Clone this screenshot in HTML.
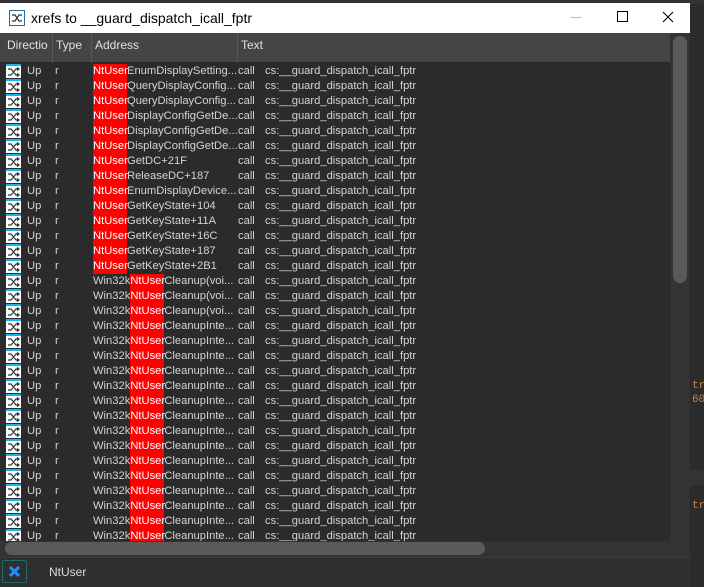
<!DOCTYPE html>
<html><head><meta charset="utf-8"><style>
body{margin:0;width:704px;height:586px;background:#2b2b2b;overflow:hidden;font-family:"Liberation Sans",sans-serif;position:relative}
.top{position:absolute;left:0;top:0;width:704px;height:4px;background:#333}
.title{position:absolute;left:0;top:3px;width:690px;height:30px;background:#fff;color:#000;font-size:14px}
.title .t{position:absolute;left:31px;top:7px}
.win{position:absolute;left:0;top:33px;width:690px;height:553px;background:#2b2b2b}
.hdr{position:absolute;left:0;top:0;width:670px;height:29px;background:#454545;color:#e0e0e0;font-size:12px}
.hdr span{position:absolute;top:5px}
.sep{position:absolute;top:0;width:1px;height:29px;background:#5a5a5a}
.rows{position:absolute;left:0;top:31px;width:670px;height:477px;overflow:hidden;color:#d4d4d4;font-size:11.2px}
.r{position:relative;height:15px;line-height:15px;white-space:nowrap}
.r span{position:absolute;top:0}
.r svg{position:absolute;left:6px;top:0}
.a{left:93px}
i{font-style:normal}
.red{background:#ff0000;display:inline-block;width:34px;color:#fff}
.vs{position:absolute;left:670px;top:0;width:20px;height:508px;background:#333}
.vt{position:absolute;left:673px;top:3px;width:14px;height:247px;background:#5a5a5a;border-radius:7px}
.hs{position:absolute;left:0;top:508px;width:690px;height:16px;background:#333}
.ht{position:absolute;left:5px;top:509px;width:480px;height:13px;background:#5a5a5a;border-radius:7px}
.bot{position:absolute;left:0;top:524px;width:690px;height:29px;background:#2f2f2f;border-top:1px solid #3c3c3c;color:#ddd;font-size:12px}
</style></head><body>
<svg width="0" height="0" style="position:absolute"><defs><symbol id="x" viewBox="0 0 15 15"><rect x="0" y="0" width="15" height="2" fill="#1ab4ea"/><rect x="0" y="2" width="15" height="12" fill="#fff"/><path d="M2 5h3l5 6h3M2 11h3l5-6h3M11 3.5l2 1.5-2 1.5M11 9.5l2 1.5-2 1.5" stroke="#333" stroke-width="1.2" fill="none"/></symbol></defs></svg>
<div class="top"></div>
<div class="title"><svg style="position:absolute;left:9px;top:7px" width="16" height="16"><rect x="0.5" y="0.5" width="15" height="15" fill="#fff" stroke="#2a6aa0"/><path d="M3 5h3l4 6h3M3 11h3l4-6h3" stroke="#333" stroke-width="1.2" fill="none"/></svg><span class="t">xrefs to __guard_dispatch_icall_fptr</span>
<svg style="position:absolute;left:570px;top:14px" width="12" height="2"><rect width="12" height="1" fill="#bbb"/></svg>
<svg style="position:absolute;left:617px;top:8px" width="11" height="11"><rect x="0.5" y="0.5" width="10" height="10" fill="none" stroke="#000"/></svg>
<svg style="position:absolute;left:662px;top:8px" width="12" height="12"><path d="M1 1L11 11M11 1L1 11" stroke="#000" stroke-width="1.1"/></svg>
</div>
<div class="win">
<div class="hdr"><span style="left:7px">Directio</span><div class="sep" style="left:52px"></div><span style="left:56px">Type</span><div class="sep" style="left:91px"></div><span style="left:95px">Address</span><div class="sep" style="left:237px"></div><span style="left:241px">Text</span></div>
<div class="rows">
<div class="r"><svg width="15" height="15"><use href="#x"/></svg><span style="left:27px">Up</span><span style="left:55px">r</span><span class="a"><i class="red">NtUser</i>EnumDisplaySetting...</span><span style="left:238px">call</span><span style="left:265px">cs:__guard_dispatch_icall_fptr</span></div>
<div class="r"><svg width="15" height="15"><use href="#x"/></svg><span style="left:27px">Up</span><span style="left:55px">r</span><span class="a"><i class="red">NtUser</i>QueryDisplayConfig...</span><span style="left:238px">call</span><span style="left:265px">cs:__guard_dispatch_icall_fptr</span></div>
<div class="r"><svg width="15" height="15"><use href="#x"/></svg><span style="left:27px">Up</span><span style="left:55px">r</span><span class="a"><i class="red">NtUser</i>QueryDisplayConfig...</span><span style="left:238px">call</span><span style="left:265px">cs:__guard_dispatch_icall_fptr</span></div>
<div class="r"><svg width="15" height="15"><use href="#x"/></svg><span style="left:27px">Up</span><span style="left:55px">r</span><span class="a"><i class="red">NtUser</i>DisplayConfigGetDe...</span><span style="left:238px">call</span><span style="left:265px">cs:__guard_dispatch_icall_fptr</span></div>
<div class="r"><svg width="15" height="15"><use href="#x"/></svg><span style="left:27px">Up</span><span style="left:55px">r</span><span class="a"><i class="red">NtUser</i>DisplayConfigGetDe...</span><span style="left:238px">call</span><span style="left:265px">cs:__guard_dispatch_icall_fptr</span></div>
<div class="r"><svg width="15" height="15"><use href="#x"/></svg><span style="left:27px">Up</span><span style="left:55px">r</span><span class="a"><i class="red">NtUser</i>DisplayConfigGetDe...</span><span style="left:238px">call</span><span style="left:265px">cs:__guard_dispatch_icall_fptr</span></div>
<div class="r"><svg width="15" height="15"><use href="#x"/></svg><span style="left:27px">Up</span><span style="left:55px">r</span><span class="a"><i class="red">NtUser</i>GetDC+21F</span><span style="left:238px">call</span><span style="left:265px">cs:__guard_dispatch_icall_fptr</span></div>
<div class="r"><svg width="15" height="15"><use href="#x"/></svg><span style="left:27px">Up</span><span style="left:55px">r</span><span class="a"><i class="red">NtUser</i>ReleaseDC+187</span><span style="left:238px">call</span><span style="left:265px">cs:__guard_dispatch_icall_fptr</span></div>
<div class="r"><svg width="15" height="15"><use href="#x"/></svg><span style="left:27px">Up</span><span style="left:55px">r</span><span class="a"><i class="red">NtUser</i>EnumDisplayDevice...</span><span style="left:238px">call</span><span style="left:265px">cs:__guard_dispatch_icall_fptr</span></div>
<div class="r"><svg width="15" height="15"><use href="#x"/></svg><span style="left:27px">Up</span><span style="left:55px">r</span><span class="a"><i class="red">NtUser</i>GetKeyState+104</span><span style="left:238px">call</span><span style="left:265px">cs:__guard_dispatch_icall_fptr</span></div>
<div class="r"><svg width="15" height="15"><use href="#x"/></svg><span style="left:27px">Up</span><span style="left:55px">r</span><span class="a"><i class="red">NtUser</i>GetKeyState+11A</span><span style="left:238px">call</span><span style="left:265px">cs:__guard_dispatch_icall_fptr</span></div>
<div class="r"><svg width="15" height="15"><use href="#x"/></svg><span style="left:27px">Up</span><span style="left:55px">r</span><span class="a"><i class="red">NtUser</i>GetKeyState+16C</span><span style="left:238px">call</span><span style="left:265px">cs:__guard_dispatch_icall_fptr</span></div>
<div class="r"><svg width="15" height="15"><use href="#x"/></svg><span style="left:27px">Up</span><span style="left:55px">r</span><span class="a"><i class="red">NtUser</i>GetKeyState+187</span><span style="left:238px">call</span><span style="left:265px">cs:__guard_dispatch_icall_fptr</span></div>
<div class="r"><svg width="15" height="15"><use href="#x"/></svg><span style="left:27px">Up</span><span style="left:55px">r</span><span class="a"><i class="red">NtUser</i>GetKeyState+2B1</span><span style="left:238px">call</span><span style="left:265px">cs:__guard_dispatch_icall_fptr</span></div>
<div class="r"><svg width="15" height="15"><use href="#x"/></svg><span style="left:27px">Up</span><span style="left:55px">r</span><span class="a">Win32k<i class="red">NtUser</i>Cleanup(voi...</span><span style="left:238px">call</span><span style="left:265px">cs:__guard_dispatch_icall_fptr</span></div>
<div class="r"><svg width="15" height="15"><use href="#x"/></svg><span style="left:27px">Up</span><span style="left:55px">r</span><span class="a">Win32k<i class="red">NtUser</i>Cleanup(voi...</span><span style="left:238px">call</span><span style="left:265px">cs:__guard_dispatch_icall_fptr</span></div>
<div class="r"><svg width="15" height="15"><use href="#x"/></svg><span style="left:27px">Up</span><span style="left:55px">r</span><span class="a">Win32k<i class="red">NtUser</i>Cleanup(voi...</span><span style="left:238px">call</span><span style="left:265px">cs:__guard_dispatch_icall_fptr</span></div>
<div class="r"><svg width="15" height="15"><use href="#x"/></svg><span style="left:27px">Up</span><span style="left:55px">r</span><span class="a">Win32k<i class="red">NtUser</i>CleanupInte...</span><span style="left:238px">call</span><span style="left:265px">cs:__guard_dispatch_icall_fptr</span></div>
<div class="r"><svg width="15" height="15"><use href="#x"/></svg><span style="left:27px">Up</span><span style="left:55px">r</span><span class="a">Win32k<i class="red">NtUser</i>CleanupInte...</span><span style="left:238px">call</span><span style="left:265px">cs:__guard_dispatch_icall_fptr</span></div>
<div class="r"><svg width="15" height="15"><use href="#x"/></svg><span style="left:27px">Up</span><span style="left:55px">r</span><span class="a">Win32k<i class="red">NtUser</i>CleanupInte...</span><span style="left:238px">call</span><span style="left:265px">cs:__guard_dispatch_icall_fptr</span></div>
<div class="r"><svg width="15" height="15"><use href="#x"/></svg><span style="left:27px">Up</span><span style="left:55px">r</span><span class="a">Win32k<i class="red">NtUser</i>CleanupInte...</span><span style="left:238px">call</span><span style="left:265px">cs:__guard_dispatch_icall_fptr</span></div>
<div class="r"><svg width="15" height="15"><use href="#x"/></svg><span style="left:27px">Up</span><span style="left:55px">r</span><span class="a">Win32k<i class="red">NtUser</i>CleanupInte...</span><span style="left:238px">call</span><span style="left:265px">cs:__guard_dispatch_icall_fptr</span></div>
<div class="r"><svg width="15" height="15"><use href="#x"/></svg><span style="left:27px">Up</span><span style="left:55px">r</span><span class="a">Win32k<i class="red">NtUser</i>CleanupInte...</span><span style="left:238px">call</span><span style="left:265px">cs:__guard_dispatch_icall_fptr</span></div>
<div class="r"><svg width="15" height="15"><use href="#x"/></svg><span style="left:27px">Up</span><span style="left:55px">r</span><span class="a">Win32k<i class="red">NtUser</i>CleanupInte...</span><span style="left:238px">call</span><span style="left:265px">cs:__guard_dispatch_icall_fptr</span></div>
<div class="r"><svg width="15" height="15"><use href="#x"/></svg><span style="left:27px">Up</span><span style="left:55px">r</span><span class="a">Win32k<i class="red">NtUser</i>CleanupInte...</span><span style="left:238px">call</span><span style="left:265px">cs:__guard_dispatch_icall_fptr</span></div>
<div class="r"><svg width="15" height="15"><use href="#x"/></svg><span style="left:27px">Up</span><span style="left:55px">r</span><span class="a">Win32k<i class="red">NtUser</i>CleanupInte...</span><span style="left:238px">call</span><span style="left:265px">cs:__guard_dispatch_icall_fptr</span></div>
<div class="r"><svg width="15" height="15"><use href="#x"/></svg><span style="left:27px">Up</span><span style="left:55px">r</span><span class="a">Win32k<i class="red">NtUser</i>CleanupInte...</span><span style="left:238px">call</span><span style="left:265px">cs:__guard_dispatch_icall_fptr</span></div>
<div class="r"><svg width="15" height="15"><use href="#x"/></svg><span style="left:27px">Up</span><span style="left:55px">r</span><span class="a">Win32k<i class="red">NtUser</i>CleanupInte...</span><span style="left:238px">call</span><span style="left:265px">cs:__guard_dispatch_icall_fptr</span></div>
<div class="r"><svg width="15" height="15"><use href="#x"/></svg><span style="left:27px">Up</span><span style="left:55px">r</span><span class="a">Win32k<i class="red">NtUser</i>CleanupInte...</span><span style="left:238px">call</span><span style="left:265px">cs:__guard_dispatch_icall_fptr</span></div>
<div class="r"><svg width="15" height="15"><use href="#x"/></svg><span style="left:27px">Up</span><span style="left:55px">r</span><span class="a">Win32k<i class="red">NtUser</i>CleanupInte...</span><span style="left:238px">call</span><span style="left:265px">cs:__guard_dispatch_icall_fptr</span></div>
<div class="r"><svg width="15" height="15"><use href="#x"/></svg><span style="left:27px">Up</span><span style="left:55px">r</span><span class="a">Win32k<i class="red">NtUser</i>CleanupInte...</span><span style="left:238px">call</span><span style="left:265px">cs:__guard_dispatch_icall_fptr</span></div>
<div class="r"><svg width="15" height="15"><use href="#x"/></svg><span style="left:27px">Up</span><span style="left:55px">r</span><span class="a">Win32k<i class="red">NtUser</i>CleanupInte...</span><span style="left:238px">call</span><span style="left:265px">cs:__guard_dispatch_icall_fptr</span></div>
</div>
<div class="vs"></div><div class="vt"></div>
<div class="hs"></div><div class="ht"></div>
<div class="bot">
<div style="position:absolute;left:2px;top:2px;width:23px;height:21px;border:1px solid #1f6b6b;border-radius:2px"><svg width="23" height="21"><path d="M7 6L16 15M16 6L7 15" stroke="#1e90ff" stroke-width="3"/></svg></div>
<span style="position:absolute;left:49px;top:7px">NtUser</span>
</div>
</div>
<div style="position:absolute;left:690px;top:470px;width:14px;height:15px;background:#333"></div>
<span style="position:absolute;left:692px;top:380px;color:#d08050;font:11px 'Liberation Mono',monospace">tr</span>
<span style="position:absolute;left:692px;top:394px;color:#d08050;font:11px 'Liberation Mono',monospace">60</span>
<span style="position:absolute;left:692px;top:500px;color:#d08050;font:11px 'Liberation Mono',monospace">tr</span>
</body></html>
